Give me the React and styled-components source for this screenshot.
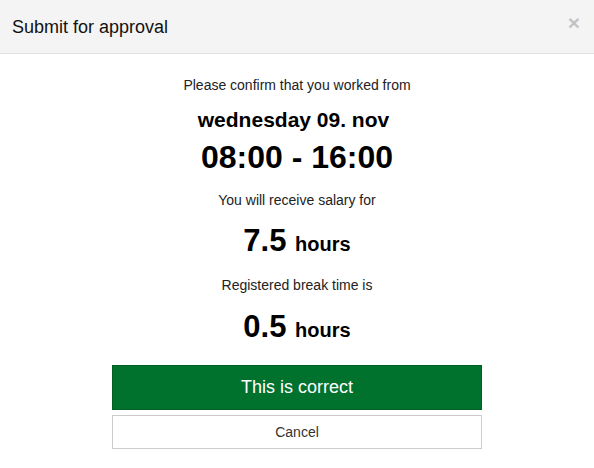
import React from 'react';
import styled, { createGlobalStyle } from 'styled-components';

const GlobalStyle = createGlobalStyle`
    html, body {
        margin: 0;
        padding: 0;
        background: #fff;
    }
    body {
        font-family: "Liberation Sans", Arial, sans-serif;
        color: #333;
    }
`;

export default () => {
    return (
        <Modal>
            <GlobalStyle />
            <Header>
                <Title>Submit for approval</Title>
                <Close aria-label="Close">×</Close>
            </Header>
            <Body>
                <Note>Please confirm that you worked from</Note>
                <DateLine>wednesday 09. nov</DateLine>
                <TimeLine>08:00 - 16:00</TimeLine>
                <Note $top={16}>You will receive salary for</Note>
                <Amount $top={14}>
                    7.5 <Unit>hours</Unit>
                </Amount>
                <Note $top={14}>Registered break time is</Note>
                <Amount $top={15}>
                    0.5 <Unit>hours</Unit>
                </Amount>
                <Actions>
                    <Confirm>This is correct</Confirm>
                    <Cancel>Cancel</Cancel>
                </Actions>
            </Body>
        </Modal>
    );
};

const Modal = styled.div`
    width: 594px;
    min-height: 468px;
    background: #fff;
`;

const Header = styled.div`
    display: flex;
    align-items: center;
    justify-content: space-between;
    height: 53px;
    padding: 0 14px 0 12px;
    background: #f4f4f4;
    border-bottom: 1px solid #e2e2e2;
`;

const Title = styled.div`
    font-size: 18px;
    color: #111;
    padding-top: 1px;
`;

const Close = styled.button`
    border: 0;
    background: none;
    padding: 0;
    margin-top: -8px;
    font-family: "Liberation Sans", Arial, sans-serif;
    font-size: 21px;
    font-weight: bold;
    line-height: 1;
    color: #000;
    opacity: 0.2;
    cursor: pointer;
`;

const Body = styled.div`
    display: flex;
    flex-direction: column;
    align-items: center;
    padding-top: 21px;
    text-align: center;
`;

const Note = styled.div`
    font-size: 14px;
    line-height: 20px;
    color: #222;
    margin-top: ${p => p.$top || 0}px;
`;

const DateLine = styled.div`
    font-size: 21px;
    font-weight: bold;
    line-height: 24px;
    color: #000;
    margin-top: 13px;
    padding-right: 7px;
`;

const TimeLine = styled.div`
    font-size: 32px;
    font-weight: bold;
    line-height: 34px;
    color: #000;
    margin-top: 8px;
`;

const Amount = styled.div`
    font-size: 31px;
    font-weight: bold;
    line-height: 34px;
    color: #000;
    margin-top: ${p => p.$top}px;
`;

const Unit = styled.span`
    font-size: 20px;
`;

const Actions = styled.div`
    display: flex;
    flex-direction: column;
    gap: 5px;
    width: 370px;
    margin-top: 18px;
`;

const Confirm = styled.button`
    height: 45px;
    background: #00722e;
    border: 1px solid #005f25;
    color: #fff;
    font-family: "Liberation Sans", Arial, sans-serif;
    font-size: 18px;
    cursor: pointer;
`;

const Cancel = styled.button`
    height: 34px;
    background: #fff;
    border: 1px solid #ccc;
    color: #333;
    font-family: "Liberation Sans", Arial, sans-serif;
    font-size: 14px;
    cursor: pointer;
`;
